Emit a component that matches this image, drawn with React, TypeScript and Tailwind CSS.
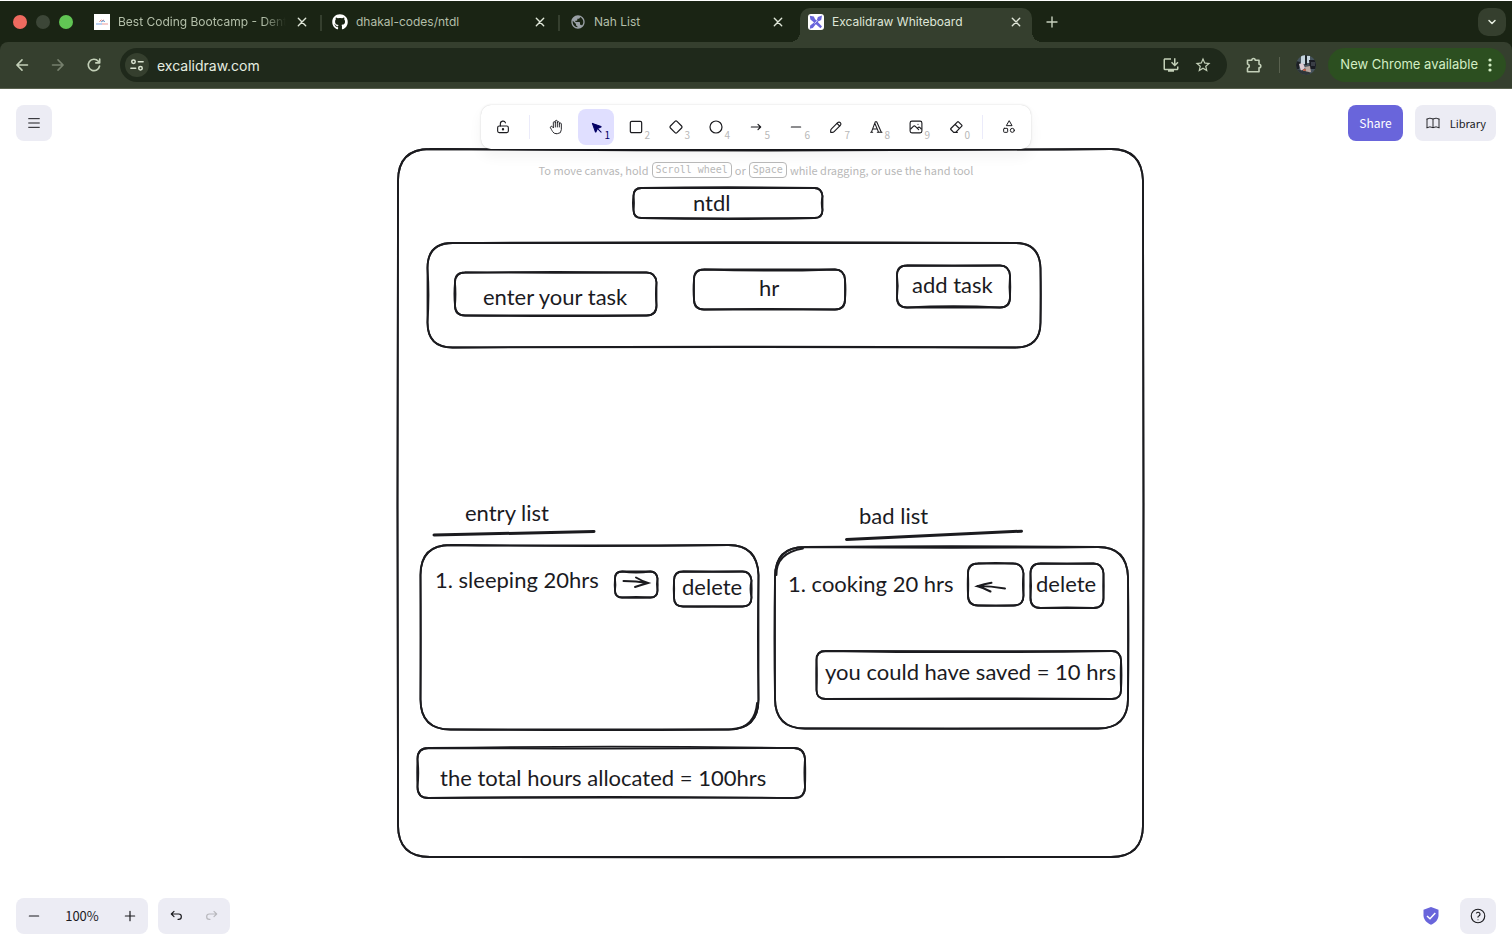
import type { ReactNode } from 'react'
import { FaGithub } from 'react-icons/fa'
import { MdStarBorder, MdOutlineExtension, MdOutlineInstallDesktop, MdPublic } from 'react-icons/md'

const UI_FONT = "font-['Noto_Sans_CJK_JP','Noto_Sans',sans-serif]"

function Icon({ children, box = 24, className = 'size-4', width = 1.5 }: { children: ReactNode; box?: number; className?: string; width?: number }) {
  return (
    <svg viewBox={`0 0 ${box} ${box}`} className={className} fill="none" stroke="currentColor" strokeWidth={width} strokeLinecap="round" strokeLinejoin="round" aria-hidden="true">
      {children}
    </svg>
  )
}

/* ---------- Browser chrome ---------- */

function CloseIcon() {
  return (
    <Icon box={10} className="size-2.5" width={1.4}>
      <path d="M1.3 1.3l7.4 7.4M8.7 1.3l-7.4 7.4" />
    </Icon>
  )
}

function BootcampFavicon() {
  return (
    <svg viewBox="0 0 16 16" className="size-4 shrink-0" aria-hidden="true">
      <rect width="16" height="16" fill="#fff" />
      <path d="M5.500 7.500l2-1.500M8 7l2-1" stroke="#e0605a" strokeWidth="1" />
      <path d="M7 8l2-1.300 2 .9" stroke="#5a9fd8" strokeWidth="1" fill="none" />
      <path d="M2 10h6" stroke="#8fb2e8" strokeWidth="1.200" />
      <path d="M8 10h6" stroke="#efaeac" strokeWidth="1.200" />
    </svg>
  )
}

function ExcalidrawFavicon() {
  return (
    <svg viewBox="0 0 16 16" className="size-4 shrink-0" aria-hidden="true">
      <rect width="16" height="16" rx="3" fill="#fff" />
      <path d="M1.800 1.800l4 .8 1.200 2.400 7 7.400-1.600 1.800-7.800-7-2.200-1.800z" fill="#6965db" />
      <path d="M14 1.600l-.8 4.400-3.200 1.400-5.200 6.600-3 .8.400-3.200 6.600-5.400 1.100-3.200z" fill="#6965db" />
      <path d="M6.500 9.500l3-3.200" stroke="#fff" strokeWidth=".7" />
    </svg>
  )
}

function Tab({ title, icon, active = false, divider = false, fade = false }: { title: string; icon: ReactNode; active?: boolean; divider?: boolean; fade?: boolean }) {
  return (
    <div className="relative flex w-[238px] items-end">
      <div className={active ? 'relative mx-[2px] flex h-[34px] w-[232px] items-center rounded-t-[10px] bg-[#353f2e] px-2 pb-[6px] text-[#dfe6d8]' : 'relative mx-[2px] flex h-[34px] w-[232px] items-center px-2 pb-[6px] text-[#b3bfa9]'}>
        {active && (
          <>
            <span className="absolute bottom-0 -left-2.5 size-2.5 bg-[radial-gradient(circle_at_0_0,transparent_10px,#353f2e_10px)]" />
            <span className="absolute -right-2.5 bottom-0 size-2.5 bg-[radial-gradient(circle_at_100%_0,transparent_10px,#353f2e_10px)]" />
          </>
        )}
        {icon}
        <a href="#tab" className={fade ? 'ml-2 min-w-0 flex-1 whitespace-nowrap [mask-image:linear-gradient(90deg,#000_86%,transparent)]' : 'ml-2 min-w-0 flex-1 whitespace-nowrap'}>
          {title}
        </a>
        <button type="button" aria-label={`Close ${title}`} className="ml-2 flex size-4 items-center justify-center text-[#dfe6d8]">
          <CloseIcon />
        </button>
      </div>
      {divider && <span className="absolute top-[14px] right-0 h-4 w-[2px] bg-[#353f2e]" />}
    </div>
  )
}

function BrowserChrome() {
  return (
    <header className="border-t border-white bg-[#1a2414] font-['Inter',sans-serif]">
      <div className="flex h-[41px] text-[12px]">
        <div className="flex w-[84px] shrink-0 items-center gap-[9px] pl-[13px]">
          <span className="size-[14px] rounded-full bg-[#ee6a5f]" />
          <span className="size-[14px] rounded-full bg-[#3c4637]" />
          <span className="size-[14px] rounded-full bg-[#61c554]" />
        </div>
        <Tab title="Best Coding Bootcamp - Dent" icon={<BootcampFavicon />} divider fade />
        <Tab title="dhakal-codes/ntdl" icon={<FaGithub className="size-4 shrink-0 text-white" />} divider />
        <Tab title="Nah List" icon={<MdPublic className="size-4 shrink-0 text-[#9aa0a6]" />} />
        <Tab title="Excalidraw Whiteboard" icon={<ExcalidrawFavicon />} active />
        <button type="button" aria-label="New tab" className="flex w-8 items-center justify-center text-[#c6d0bd]">
          <Icon box={12} className="size-3" width={1.4}><path d="M6 1v10M1 6h10" /></Icon>
        </button>
        <div className="flex flex-1 items-center justify-end pr-[6px]">
          <button type="button" aria-label="Search tabs" className="flex size-7 items-center justify-center rounded-[10px] bg-[#353f2e] text-[#e6ede0]">
            <Icon box={10} className="size-2.5" width={1.5}><path d="M2 3.500L5 6.500l3-3" /></Icon>
          </button>
        </div>
      </div>
      <div className="flex h-[47px] items-center rounded-t-[8px] border-b border-[#59614f] bg-[#353f2e] pr-[6px] pl-[14px] text-[#c3d0b8]">
        <button type="button" aria-label="Back" className="mr-5 flex size-4 items-center justify-center">
          <Icon box={16} width={1.6}><path d="M13.500 8H3M8 2.900L2.900 8 8 13.100" /></Icon>
        </button>
        <button type="button" aria-label="Forward" className="mr-5 flex size-4 items-center justify-center text-[#76806d]">
          <Icon box={16} width={1.6}><path d="M2.500 8H13M8 2.900L13.100 8 8 13.100" /></Icon>
        </button>
        <button type="button" aria-label="Reload" className="flex size-4 items-center justify-center">
          <Icon box={16} width={1.6}><path d="M13.6 9A5.700 5.700 0 1 1 12.300 4.200L13.700 5.700M13.700 2v3.900H9.800" /></Icon>
        </button>
        <div className="ml-[18px] flex h-[34px] min-w-0 flex-1 items-center rounded-full bg-[#1f291b] pr-[15px] pl-[5px]">
          <button type="button" aria-label="View site information" className="flex size-6 items-center justify-center rounded-full bg-[#353f2e] text-[#dbe5d2]">
            <Icon box={16} className="size-[14px]" width={1.7}>
              <circle cx="4" cy="4.200" r="2" />
              <path d="M9.500 4.200H15M1 11.800h5.500" />
              <circle cx="12" cy="11.800" r="2" />
            </Icon>
          </button>
          <input aria-label="Address" defaultValue="excalidraw.com" className="ml-2 min-w-0 flex-1 bg-transparent text-[14px] text-[#e6ede0] outline-none" />
          <button type="button" aria-label="Install app" className="mr-[14px]"><MdOutlineInstallDesktop className="size-[18px]" /></button>
          <button type="button" aria-label="Bookmark"><MdStarBorder className="size-[18px]" /></button>
        </div>
        <button type="button" aria-label="Extensions" className="ml-[18px]">
          <Icon box={18} className="size-[18px]" width={1.600}>
            <path d="M2.500 4.200h4.300a1.700 1.700 0 0 1 3.400 0h3.800v4a1.800 1.800 0 0 1 0 3.600v4H2.500v-3.600c2.400-.6 2.400-3.600 0-4.200z" />
          </Icon>
        </button>
        <span className="mx-4 h-4 w-px bg-[#59614f]" />
        <button type="button" aria-label="Profile" className="mr-3">
          <svg viewBox="0 0 20 20" className="size-5" aria-hidden="true">
            <clipPath id="avatar"><circle cx="10" cy="10" r="10" /></clipPath>
            <g clipPath="url(#avatar)">
              <rect width="20" height="20" fill="#46535c" />
              <path d="M5 0h4v9H5zM11 1h3v7h-3z" fill="#c4d4dc" />
              <path d="M9 0h2v10H9z" fill="#1e262b" />
              <path d="M13 5h7v9h-6z" fill="#191b22" />
              <path d="M15 8h4M15 10h4" stroke="#8b95a0" strokeWidth=".6" />
              <path d="M0 6l4 1-1 7H0z" fill="#1c2024" />
              <path d="M3 9l4-1 2 5-4 3z" fill="#dcccd2" />
              <path d="M9 12l5-1 1 6-5 1z" fill="#b8a8a0" />
              <path d="M0 14l8 2 5 1 3 3H0z" fill="#2e3638" />
              <path d="M7 14h3v2H7z" fill="#b5604b" />
            </g>
          </svg>
        </button>
        <button type="button" className="flex h-[34px] items-center rounded-full bg-[#2c4f20] pr-[14px] pl-3 text-[13px] text-[#d3eec4]">
          New Chrome available
          <svg viewBox="0 0 4 16" className="ml-[10px] h-4 w-1" fill="currentColor" aria-hidden="true">
            <circle cx="2" cy="3" r="1.600" /><circle cx="2" cy="8" r="1.600" /><circle cx="2" cy="13" r="1.600" />
          </svg>
        </button>
      </div>
    </header>
  )
}

/* ---------- Canvas drawing ---------- */

type Box = { x0: number; y0: number; x1: number; y1: number; r: number; bow: number[] }

// bow: midpoint offset of the top, right, bottom and left sides; first stroke, then second.
const boxes: Box[] = [
  { x0: 398, y0: 149, x1: 1143, y1: 857, r: 32, bow: [1, 0.5, 0, -0.5, 1.5, 0.5, 0.5, -0.5] },
  { x0: 633.5, y0: 188, x1: 822.5, y1: 218, r: 8, bow: [-0.8, 0, 1, -0.6, 0, -0.8, 0.3, 0.5] },
  { x0: 427.5, y0: 243, x1: 1040.5, y1: 347.5, r: 25, bow: [-0.8, 0.4, -0.8, 1, 0, 0, -0.5, 0] },
  { x0: 455, y0: 272.5, x1: 656.5, y1: 315.5, r: 10, bow: [-0.6, 0, 0.6, -0.6, 0.3, -0.6, 0, 0.5] },
  { x0: 694, y0: 269.5, x1: 845, y1: 309.5, r: 10, bow: [1.2, 0, -0.6, -0.5, 0, 0.5, 0, 0] },
  { x0: 897, y0: 265.5, x1: 1010, y1: 307.5, r: 10, bow: [0.3, -0.5, -1.3, 0.8, 0, 0.3, 0, 0] },
  { x0: 420.5, y0: 545, x1: 758.5, y1: 729.5, r: 30, bow: [1, -0.6, 0.6, 0.3, 0.5, 0, 0, 0] },
  { x0: 615, y0: 571.5, x1: 657.5, y1: 597.5, r: 7, bow: [1, -0.6, -0.6, 0.4, 0, 0.2, 0.3, -0.3] },
  { x0: 674, y0: 571.5, x1: 751.5, y1: 606.5, r: 9, bow: [0.3, -1, 0.3, -0.3, 0, 0.2, -0.3, 0.2] },
  { x0: 775, y0: 547, x1: 1128, y1: 728.5, r: 30, bow: [-0.8, 0.5, 0, -0.6, 0.8, 0, 0.3, 0] },
  { x0: 968, y0: 563.5, x1: 1023.5, y1: 605.5, r: 10, bow: [-0.7, -0.6, 0.4, 0.3, 0.2, 0.2, -0.2, -0.3] },
  { x0: 1030.5, y0: 563.5, x1: 1103.5, y1: 608, r: 10, bow: [0.3, -0.3, -0.6, 0.6, 0, 0.3, 0, -0.3] },
  { x0: 816.5, y0: 651, x1: 1121, y1: 699, r: 9, bow: [1.2, 0.5, -0.6, 0.4, 0.2, -0.3, 0.2, -0.3] },
  { x0: 417.5, y0: 748, x1: 805, y1: 798, r: 11, bow: [-1.3, -0.6, -1.2, 0.8, 0.6, 0.3, -0.3, -0.3] },
]

function strokePath({ x0, y0, x1, y1, r, bow }: Box, pass: number) {
  const [t, rt, b, l] = bow.slice(pass * 4, pass * 4 + 4)
  const mx = (x0 + x1) / 2
  const my = (y0 + y1) / 2
  return (
    `M${x0 + r} ${y0}Q${mx} ${y0 + 2 * t} ${x1 - r} ${y0}Q${x1 - 1} ${y0} ${x1} ${y0 + r}` +
    `Q${x1 + 2 * rt} ${my} ${x1} ${y1 - r}Q${x1} ${y1} ${x1 - r} ${y1}` +
    `Q${mx} ${y1 + 2 * b} ${x0 + r} ${y1}Q${x0} ${y1} ${x0} ${y1 - r}` +
    `Q${x0 + 2 * l} ${my} ${x0} ${y0 + r}Q${x0} ${y0} ${x0 + r} ${y0}`
  )
}

function Drawing() {
  return (
    <div className="absolute top-0 left-1/2 h-[780px] w-[784px] -translate-x-1/2 font-['Lato',sans-serif] text-[22px] leading-6 whitespace-nowrap text-[#1b1b1f]">
      <svg viewBox="364 89 784 780" className="absolute inset-0 size-full" fill="none" stroke="#1b1b1f" strokeWidth="1.8" strokeLinecap="round" aria-hidden="true">
        {boxes.map((box) => (
          <g key={`${box.x0}-${box.y0}`}>
            <path d={strokePath(box, 0)} />
            <path d={strokePath(box, 1)} />
          </g>
        ))}
        <path d="M776.500 575Q776 553 803 548.500" />
        <path d="M757 703Q755 727 733 729" />
        <path d="M434 535L594 531.500M846.500 539.500L1021.500 531.200" strokeWidth="3" />
        <path d="M623.500 581Q636 581 648 583M636 577.500Q642 581 648 583Q641 585 635 587" strokeWidth="2" />
        <path d="M1005 588.500Q991 586 977.500 586M991.500 582.800Q984 584 977.500 586.300Q984 588 990.500 591.500" strokeWidth="2" />
      </svg>
      <span className="absolute top-[102px] left-[329px]">ntdl</span>
      <span className="absolute top-[196px] left-[119px]">enter your task</span>
      <span className="absolute top-[187px] left-[395px]">hr</span>
      <span className="absolute top-[184px] left-[548px]">add task</span>
      <span className="absolute top-[412px] left-[101px]">entry list</span>
      <span className="absolute top-[415px] left-[495px]">bad list</span>
      <span className="absolute top-[479px] left-[71px]">1. sleeping 20hrs</span>
      <span className="absolute top-[486px] left-[318px]">delete</span>
      <span className="absolute top-[483px] left-[424px]">1. cooking 20 hrs</span>
      <span className="absolute top-[483px] left-[672px]">delete</span>
      <span className="absolute top-[571px] left-[461px]">you could have saved = 10 hrs</span>
      <span className="absolute top-[677px] left-[76px]">the total hours allocated = 100hrs</span>
    </div>
  )
}

/* ---------- Toolbar ---------- */

type Tool = { label: string; hotkey?: string; icon: ReactNode; active?: boolean }

const tools: Tool[] = [
  {
    label: 'Hand',
    icon: (
      <Icon width={1.4}>
        <path d="M8 13v-7.5a1.5 1.5 0 0 1 3 0v6.5" />
        <path d="M11 5.500v-2a1.500 1.500 0 1 1 3 0v8.500" />
        <path d="M14 5.500a1.500 1.500 0 0 1 3 0v6.500" />
        <path d="M17 7.500a1.500 1.500 0 0 1 3 0v8.500a6 6 0 0 1-6 6h-2h.208a6 6 0 0 1-5.012-2.700a69.740 69.740 0 0 1-.196-.300c-.312-.479-1.407-2.388-3.286-5.728a1.500 1.500 0 0 1 .536-2.022a1.867 1.867 0 0 1 2.280.280l1.470 1.470" />
      </Icon>
    ),
  },
  {
    label: 'Selection',
    hotkey: '1',
    active: true,
    icon: (
      <Icon box={22} width={1.4}>
        <g fill="currentColor">
          <path d="M6 6l4.153 11.793a.365.365 0 0 0 .331.207a.366.366 0 0 0 .332-.207l2.184-4.793l4.787-1.994a.355.355 0 0 0 .213-.323a.355.355 0 0 0-.213-.323l-11.787-4.360z" />
          <path d="M13.500 13.500l4.500 4.500" />
        </g>
      </Icon>
    ),
  },
  { label: 'Rectangle', hotkey: '2', icon: <Icon width={1.8}><rect x="3.500" y="3.500" width="17" height="17" rx="2" /></Icon> },
  {
    label: 'Diamond',
    hotkey: '3',
    icon: (
      <Icon width={1.8}>
        <path d="M10.500 20.400l-6.900-6.900c-.781-.781-.781-2.219 0-3l6.900-6.900c.781-.781 2.219-.781 3 0l6.900 6.900c.781.781.781 2.219 0 3l-6.900 6.900c-.781.781-2.219.781-3 0z" />
      </Icon>
    ),
  },
  { label: 'Ellipse', hotkey: '4', icon: <Icon width={1.8}><circle cx="12" cy="12" r="9" /></Icon> },
  { label: 'Arrow', hotkey: '5', icon: <Icon width={1.8}><path d="M5 12h14M15 16l4-4M15 8l4 4" /></Icon> },
  { label: 'Line', hotkey: '6', icon: <Icon box={20}><path d="M4.200 10h11.600" /></Icon> },
  {
    label: 'Draw',
    hotkey: '7',
    icon: (
      <Icon box={20} width={1.4}>
        <path d="m7.643 15.690 7.774-7.773a2.357 2.357 0 1 0-3.334-3.334L4.310 12.357a3.333 3.333 0 0 0-.977 2.357v1.953h1.953c.884 0 1.732-.352 2.357-.977Z" />
        <path d="m11.250 5.417 3.333 3.333" />
      </Icon>
    ),
  },
  {
    label: 'Text',
    hotkey: '8',
    icon: (
      <Icon width={1.6}>
        <path d="M4 20h3M14 20h7M6.900 15h6.900M10.200 6.300L16 20M5 20L11 4h2l7 16" />
      </Icon>
    ),
  },
  {
    label: 'Insert image',
    hotkey: '9',
    icon: (
      <Icon box={20} width={1.4}>
        <path d="M12.500 6.667h.010" />
        <rect x="2.625" y="2.625" width="14.750" height="14.750" rx="2.284" />
        <path d="m3.333 12.500 3.334-3.333c.773-.745 1.726-.745 2.500 0l4.166 4.166M11.667 11.667l.833-.834c.774-.744 1.726-.744 2.500 0l1.667 1.667" />
      </Icon>
    ),
  },
  {
    label: 'Eraser',
    hotkey: '0',
    icon: (
      <Icon width={1.800}>
        <path d="M9 20h5M8.500 20l-4.210-4.300a1 1 0 0 1 0-1.410l10-10a1 1 0 0 1 1.410 0l5 5a1 1 0 0 1 0 1.410l-9.200 9.300zM17 14.300l-6.300-6.300" />
      </Icon>
    ),
  },
]

function ToolButton({ label, hotkey, icon, active }: Tool) {
  return (
    <button type="button" aria-label={label} aria-pressed={active} className={active ? 'relative flex size-9 items-center justify-center rounded-lg bg-[#e0dfff] text-[#030064]' : 'relative flex size-9 items-center justify-center rounded-lg text-[#1b1b1f]'}>
      {icon}
      {hotkey && <span className={active ? 'absolute right-1 bottom-[3px] text-[10px] leading-[14px]' : 'absolute right-1 bottom-[3px] text-[10px] leading-[14px] text-[#b8b8b8]'}>{hotkey}</span>}
    </button>
  )
}

function Toolbar() {
  return (
    <div role="toolbar" aria-label="Shapes" className="flex h-11 items-center gap-1 rounded-[10px] bg-white px-1 shadow-[0_0_1px_rgba(0,0,0,0.17),0_0_3px_rgba(0,0,0,0.08),0_7px_14px_rgba(0,0,0,0.05)]">
      <ToolButton
        label="Keep selected tool active"
        icon={
          <Icon box={20} width={1.4}>
            <rect x="3.300" y="8.800" width="13.400" height="8.200" rx="2" />
            <path d="M6.700 8.600V6a3.300 3.300 0 0 1 6.400-1.200" />
            <circle cx="10" cy="12.900" r=".8" fill="currentColor" />
          </Icon>
        }
      />
      <span className="mx-1 h-6 w-px bg-[#ebebfa]" />
      {tools.map((tool) => <ToolButton key={tool.label} {...tool} />)}
      <span className="mx-1 h-6 w-px bg-[#ebebfa]" />
      <ToolButton
        label="More tools"
        icon={
          <Icon>
            <path d="M12 3l-4 7h8z" />
            <circle cx="17" cy="17" r="3" />
            <rect x="4" y="14" width="6" height="6" rx="1" />
          </Icon>
        }
      />
    </div>
  )
}

function Kbd({ children }: { children: ReactNode }) {
  return <kbd className="rounded border border-[#b8b8b8] px-[3px] font-['DejaVu_Sans_Mono',monospace] text-[10px] leading-[14px]">{children}</kbd>
}

export default function App() {
  return (
    <div className="flex min-h-screen flex-col bg-white">
      <BrowserChrome />
      <main className={`relative flex min-h-[780px] flex-1 flex-col justify-between overflow-hidden p-4 text-[12px] text-[#1b1b1f] ${UI_FONT}`}>
        <Drawing />
        <div className="relative grid grid-cols-[1fr_auto_1fr] items-start">
          <button type="button" aria-label="Menu" className="flex size-9 items-center justify-center rounded-lg bg-[#ececf4]">
            <Icon width={1.5}><path d="M4 5.500h16M4 12h16M4 18.500h16" /></Icon>
          </button>
          <div className="flex flex-col items-center">
            <Toolbar />
            <p className="mt-3 flex h-[18px] items-center gap-[3px] text-[11px] leading-[18px] text-[#b8b8b8]">
              To move canvas, hold <Kbd>Scroll wheel</Kbd> or <Kbd>Space</Kbd> while dragging, or use the hand tool
            </p>
          </div>
          <div className="flex justify-end gap-3">
            <button type="button" className="h-9 rounded-lg bg-[#6965db] px-[11px] text-white">Share</button>
            <button type="button" className="flex h-9 items-center gap-[9px] rounded-lg bg-[#ececf4] px-[10px] text-[11px]">
              <Icon width={1.4}><path d="M3 19a9 9 0 0 1 9 0a9 9 0 0 1 9 0M3 6a9 9 0 0 1 9 0a9 9 0 0 1 9 0M3 6v13M12 6v13M21 6v13" /></Icon>
              Library
            </button>
          </div>
        </div>
        <footer className="relative flex items-center">
          <div className="flex h-9 items-center rounded-lg bg-[#ececf4]">
            <button type="button" aria-label="Zoom out" className="flex size-9 items-center justify-center">
              <Icon box={20}><path d="M4.200 10h11.600" /></Icon>
            </button>
            <button type="button" className="w-[60px] text-center text-[13px]">100%</button>
            <button type="button" aria-label="Zoom in" className="flex size-9 items-center justify-center">
              <Icon box={20}><path d="M10 4.200v11.600M4.200 10h11.600" /></Icon>
            </button>
          </div>
          <div className="ml-[10px] flex h-9 rounded-lg bg-[#ececf4]">
            <button type="button" aria-label="Undo" className="flex size-9 items-center justify-center">
              <Icon box={20}><path d="M7.500 10.833 4.167 7.500 7.500 4.167M4.167 7.500h9.166a3.333 3.333 0 0 1 0 6.667H12.500" /></Icon>
            </button>
            <button type="button" aria-label="Redo" disabled className="flex size-9 items-center justify-center text-[#b8b8bd]">
              <Icon box={20}><path d="M12.500 10.833 15.833 7.500 12.500 4.167M15.833 7.500H6.667a3.333 3.333 0 1 0 0 6.667H7.500" /></Icon>
            </button>
          </div>
          <a href="#encryption" aria-label="End-to-end encryption" className="mr-5 ml-auto">
            <svg viewBox="0 0 18 20" className="h-5 w-[18px]" aria-hidden="true">
              <path d="M9 1l7.500 2.700v5.500c0 4.300-3 7.500-7.500 9.600-4.500-2.100-7.500-5.300-7.500-9.600V3.700z" fill="#6965db" />
              <path d="M5 10l3 2.800L13.300 7" fill="none" stroke="#fff" strokeWidth="1.5" />
            </svg>
          </a>
          <button type="button" aria-label="Help" className="flex size-9 items-center justify-center rounded-lg bg-[#ececf4]">
            <Icon className="size-[18px]"><circle cx="12" cy="12" r="9" /><path d="M12 17v.010M12 13.500a1.500 1.500 0 0 1 1-1.500a2.600 2.600 0 1 0-3-4" /></Icon>
          </button>
        </footer>
      </main>
    </div>
  )
}
